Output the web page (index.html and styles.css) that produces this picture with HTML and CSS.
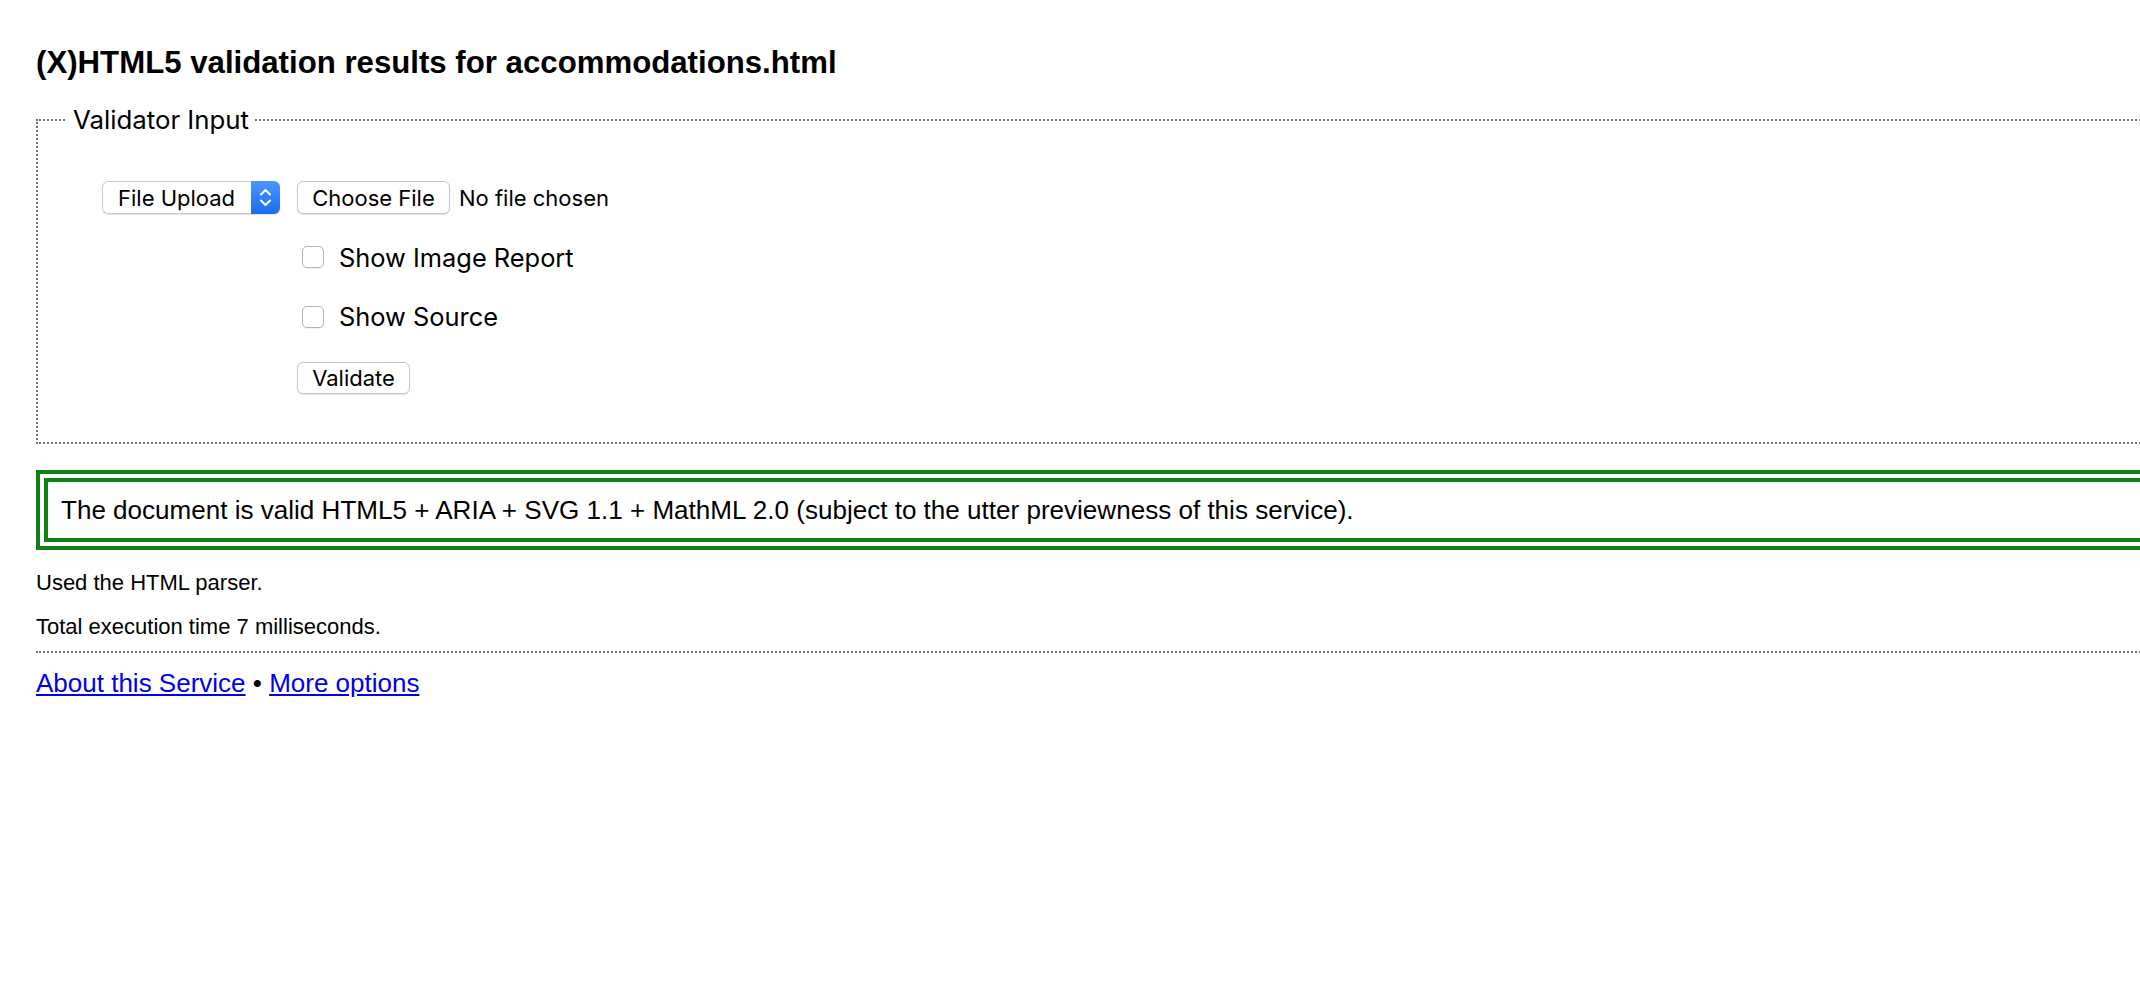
FILE: index.html
```html
<!DOCTYPE html>
<html lang="en">
<head>
<meta charset="utf-8">
<title>Validation results for accommodations.html</title>
<link rel="stylesheet" href="styles.css">
</head>
<body>
<h1 class="title">(X)HTML5 validation results for accommodations.html</h1>
<form class="input-form">
  <fieldset class="input-box">
    <legend class="input-legend">Validator Input</legend>
    <div class="controls">
      <div class="select-box">
        <span class="select-label">File Upload</span>
        <span class="select-arrows">
          <svg width="29" height="33" viewBox="0 0 29 33" aria-hidden="true">
            <polyline points="10,13.5 14.5,9 19,13.5" fill="none" stroke="#fff" stroke-width="2" stroke-linecap="round" stroke-linejoin="round"/>
            <polyline points="10,19.5 14.5,24 19,19.5" fill="none" stroke="#fff" stroke-width="2" stroke-linecap="round" stroke-linejoin="round"/>
          </svg>
        </span>
      </div>
      <div class="file-row">
        <button type="button" class="btn btn-file">Choose File</button>
        <span class="file-status">No file chosen</span>
      </div>
      <label class="check-row cell2"><input type="checkbox" class="check">Show Image Report</label>
      <label class="check-row cell2"><input type="checkbox" class="check">Show Source</label>
      <div class="cell2"><button type="button" class="btn btn-validate">Validate</button></div>
    </div>
  </fieldset>
</form>
<p class="success">The document is valid HTML5 + ARIA + SVG 1.1 + MathML 2.0 (subject to the utter previewness of this service).</p>
<p class="stats">Used the HTML parser.</p>
<p class="stats">Total execution time 7 milliseconds.</p>
<hr class="rule">
<p class="footer-links"><a href="#" class="link">About this Service</a> • <a href="#" class="link">More options</a></p>
</body>
</html>
```

FILE: styles.css
```css
html {
  overflow: hidden;
  background: #fff;
}

body {
  margin: 0 0 0 36px;
  width: 2400px;
  font-family: "Liberation Sans", Arial, Helvetica, sans-serif;
  font-size: 22px;
  color: #000;
}

.title {
  font-size: 31.2px;
  line-height: 36px;
  font-weight: bold;
  margin: 45px 0 25px;
}

.input-form {
  margin: 0;
}

.input-box {
  margin: 0;
  min-width: 0;
  border: 2px dotted #707070;
  padding: 45px 0 47px 29px;
}

.input-legend {
  font-family: Inter, "Open Sans", sans-serif;
  font-size: 25.8px;
  line-height: 28px;
  padding: 0 6px;
}

.controls {
  margin-left: 35px;
  display: grid;
  grid-template-columns: 178px auto;
  grid-auto-rows: 37px;
  column-gap: 17px;
  row-gap: 22.5px;
  align-items: center;
  justify-items: start;
  font-family: Inter, "Open Sans", sans-serif;
  font-size: 22px;
}

.cell2 {
  grid-column: 2;
}

.select-box {
  display: flex;
  width: 178px;
  height: 33px;
  border-radius: 6px;
  overflow: hidden;
  box-shadow: 0 1px 1px rgba(0, 0, 0, 0.12);
}

.select-label {
  flex: 1;
  display: flex;
  align-items: center;
  padding-left: 15px;
  border: 1px solid #c9c9c9;
  border-right: 0;
  border-radius: 6px 0 0 6px;
  background: #fff;
}

.select-arrows {
  width: 29px;
  height: 33px;
  background: linear-gradient(#4b97ff, #1a6cf2);
}

.select-arrows svg {
  display: block;
}

.file-row {
  display: flex;
  align-items: center;
}

.btn {
  font-family: Inter, "Open Sans", sans-serif;
  font-size: 22px;
  color: #000;
  background: #fff;
  border: 1px solid #c6c6c6;
  border-radius: 6px;
  box-shadow: 0 1px 1px rgba(0, 0, 0, 0.12);
  padding: 0;
  margin: 0;
}

.btn-file {
  width: 153px;
  height: 33px;
}

.file-status {
  margin-left: 9px;
}

.check-row {
  display: flex;
  align-items: center;
  font-size: 25.4px;
}

.check {
  appearance: none;
  -webkit-appearance: none;
  width: 22px;
  height: 22px;
  margin: 0 15px 0 5px;
  border: 1px solid #b3b3b3;
  border-radius: 5px;
  background: #fff;
  box-shadow: 0 1px 1px rgba(0, 0, 0, 0.06);
}

.btn-validate {
  width: 113px;
  height: 32px;
  margin-top: 3px;
}

.success {
  margin: 26px 0 20px;
  border: 12px double #128012;
  padding: 13px;
  font-size: 26.06px;
  line-height: 30px;
}

.stats {
  margin: 0 0 19px;
  line-height: 25px;
}

.rule {
  height: 0;
  border: 0;
  border-top: 2px dotted #707070;
  margin: -7px 0 15px;
}

.footer-links {
  margin: 0;
  font-size: 26px;
  line-height: 30px;
}

.link {
  color: #0000ee;
}
```
